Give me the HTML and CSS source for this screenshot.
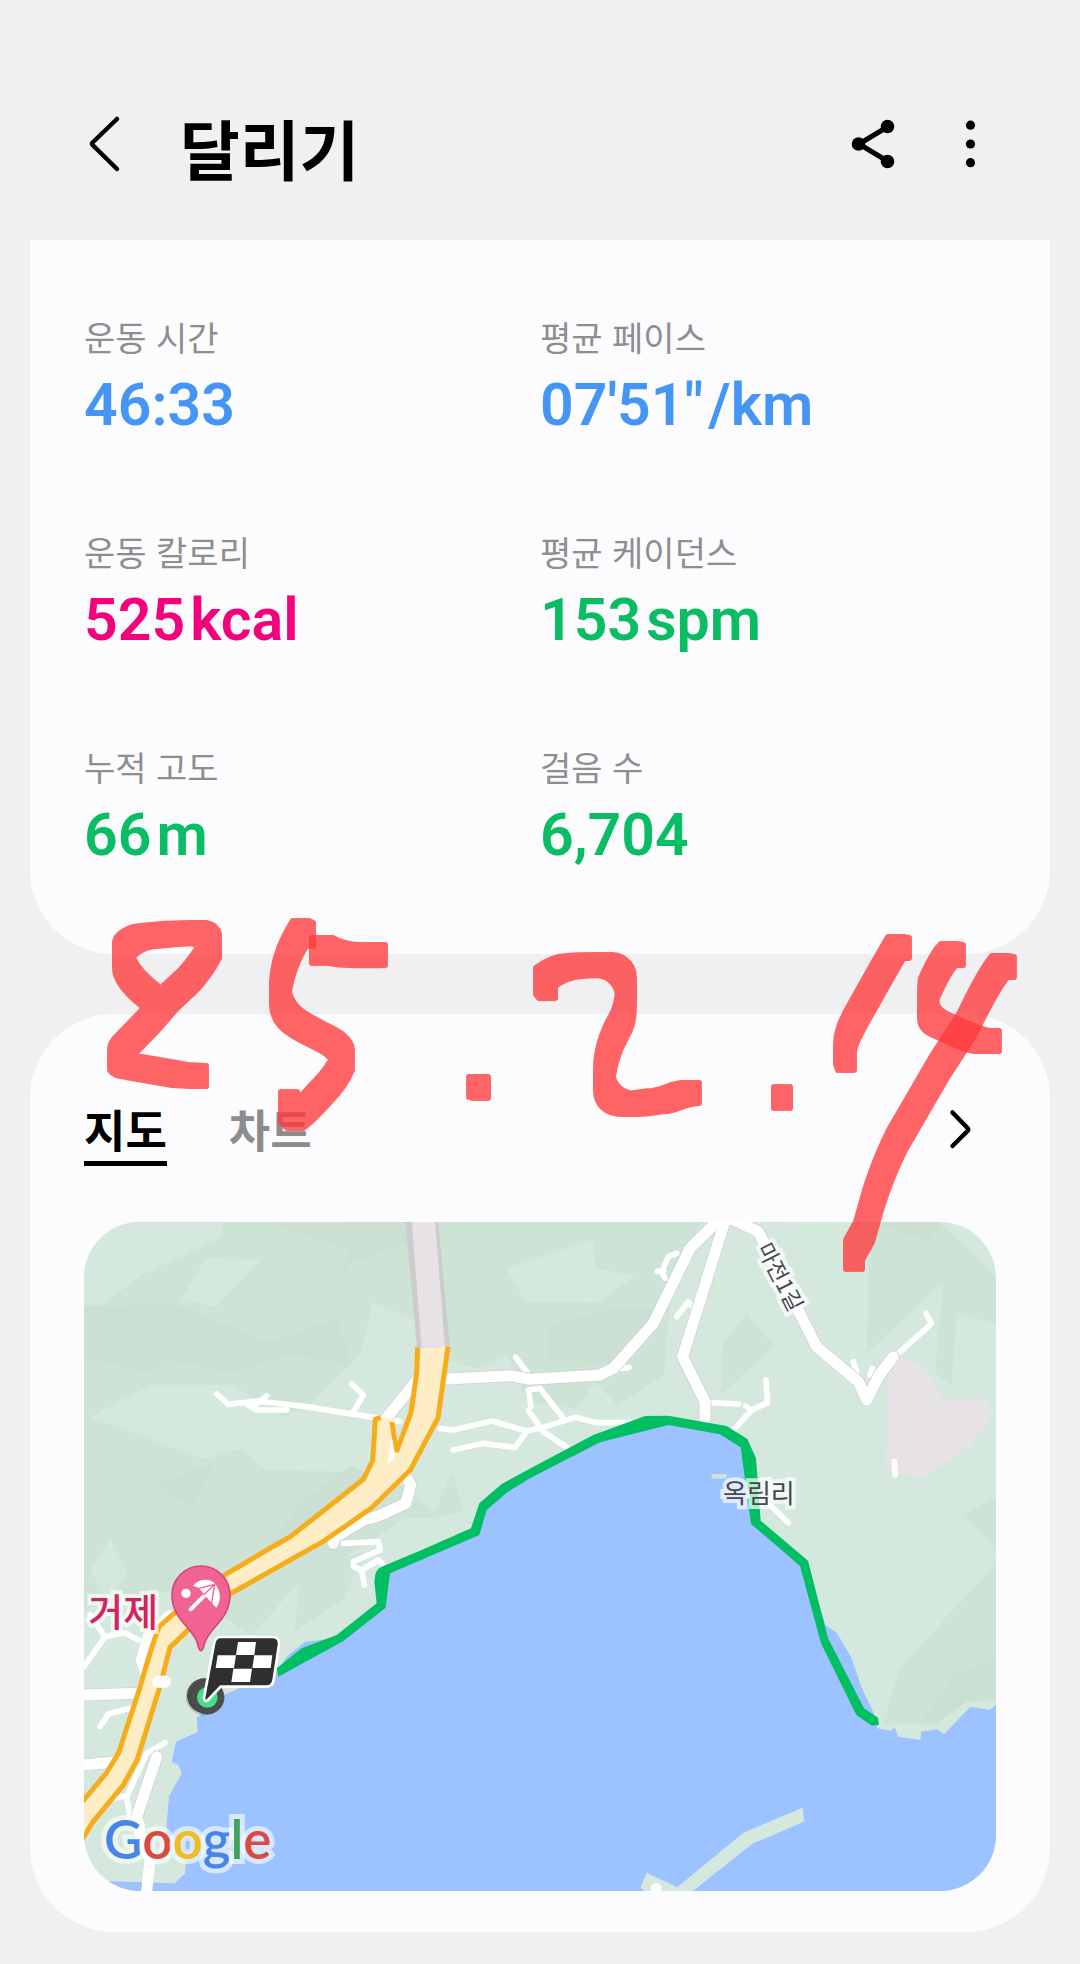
FILE: index.html
```html
<!DOCTYPE html>
<html lang="ko">
<head>
<meta charset="utf-8">
<meta name="viewport" content="width=device-width, initial-scale=1">
<title>달리기</title>
<link rel="stylesheet" href="styles.css">
</head>
<body>
<div class="page">
  <header class="topbar">
    <button class="icon-button back" type="button" aria-label="뒤로">
      <svg width="40" height="64" viewBox="0 0 40 64"><path d="M33 7 8.600 30.500Q7.500 31.800 8.600 33L33 57" fill="none" stroke="#000" stroke-width="4.500" stroke-linecap="round" stroke-linejoin="round"/></svg>
    </button>
    <h1 class="title">달리기</h1>
    <button class="icon-button" type="button" aria-label="공유">
      <svg width="48" height="64" viewBox="0 0 48 64"><path d="M38 14.500 9 32 38 49.500" fill="none" stroke="#000" stroke-width="5"/><circle cx="8.500" cy="32" r="6.800"/><circle cx="37.500" cy="14.500" r="6.800"/><circle cx="37.500" cy="49.500" r="6.800"/></svg>
    </button>
    <button class="icon-button more" type="button" aria-label="더보기">
      <svg width="48" height="64" viewBox="0 0 48 64"><circle cx="22.500" cy="13.200" r="4.600"/><circle cx="22.500" cy="32" r="4.600"/><circle cx="22.500" cy="50.700" r="4.600"/></svg>
    </button>
  </header>

  <main>
    <section class="card stats-card">
      <dl class="stats">
        <div class="stat"><dt>운동 시간</dt><dd class="blue">46:33</dd></div>
        <div class="stat"><dt>평균 페이스</dt><dd class="blue">07'51"<span class="unit">/km</span></dd></div>
        <div class="stat"><dt>운동 칼로리</dt><dd class="pink">525<span class="unit">kcal</span></dd></div>
        <div class="stat"><dt>평균 케이던스</dt><dd class="green">153<span class="unit">spm</span></dd></div>
        <div class="stat"><dt>누적 고도</dt><dd class="green">66<span class="unit">m</span></dd></div>
        <div class="stat"><dt>걸음 수</dt><dd class="green">6,704</dd></div>
      </dl>
    </section>

    <section class="card map-card">
      <div class="tabs">
        <button class="tab active" type="button">지도</button>
        <button class="tab" type="button">차트</button>
        <button class="icon-button open" type="button" aria-label="자세히">
          <svg width="48" height="60" viewBox="0 0 48 60"><path d="M4.500 9.500 19.500 25Q20.800 26.500 19.500 28L4.500 43" fill="none" stroke="#000" stroke-width="4.500" stroke-linecap="round" stroke-linejoin="round"/></svg>
        </button>
      </div>

      <div class="map">
        <svg class="map-art" viewBox="0 0 2736 2007" aria-hidden="true">
          <rect width="2736" height="2007" fill="#d5e8dd"/>
          <!-- terrain shading -->
          <g fill="#cde3d6">
            <path d="M0 0H1850L1760 200 1740 460 1600 550 1530 480 1480 560 1330 540 1270 400 1180 440 1040 400 993 294 865 240 832 395 680 545 600 585 450 490H200L18 585 360 712 470 680 550 745 900 750 1050 870 1105 750 1140 870 1060 885 960 890 870 950 640 1090 500 1240 300 1100 0 1150Z"/>
            <path d="M2358 0H2568L2736 164V304L2618 274 2603 489 2553 454 2578 179 2348 394Z"/>
            <path d="M1988 274 2071 372 1910 519 1918 364Z"/>
            <path d="M2736 1029 2580 1194 2448 1339 2396 1504 2548 1509 2648 1439 2736 1434Z"/>
            <path d="M2638 879 2736 824V974Z"/>
            <path d="M650 1045 840 990 780 1130 632 1230Z"/>
          </g>
          <g fill="#cbdfd3">
            <path d="M0 254 278 249 558 364 758 289 803 424 608 399 438 454 243 409 208 454 0 409Z"/>
            <path d="M558 4 968 0 978 59 808 119 758 184 798 84Z"/>
            <path d="M1398 309 1608 254 1728 264 1678 324 1588 424 1398 414Z"/>
            <path d="M218 789 388 724 328 852Z"/>
            <path d="M658 834 808 729 858 764 608 939 548 974Z"/>
            <path d="M2358 0H2568L2540 60Z"/>
            <path d="M2511 1499 2617 1354 2736 1314V1434L2648 1439 2548 1509Z"/>
          </g>
          <g fill="#d5e8dd">
            <path d="M0 0H415V45L170 160 55 250H0Z"/>
            <path d="M368 108 530 115 395 255 290 232Z"/>
            <path d="M1268 139 1528 52 1535 139 1653 162 1543 242 1323 240Z"/>
            <path d="M80 950 130 1050 70 1150 20 1040Z"/>
          </g>
          <g fill="#d3eadd">
            <path d="M2100 0H2358V110L2250 80Z"/>
            <path d="M1850 380 1900 130 2010 130Z"/>
            <path d="M2258 969 2308 899 2448 844 2528 914Z"/>
            <path d="M2395 1137 2499 1144 2428 1284Z"/>
          </g>
          <path d="M2413 444 2448 404 2518 429 2578 534 2703 529 2726 574 2663 669 2518 767 2438 754 2406 739Z" fill="#e7e2e6"/>
          <!-- sea -->
          <path d="M2736 1449 2716 1464 2659 1454 2580 1537 2559 1522 2511 1529 2509 1554 2443 1544 2432 1516 2422 1527 2380 1519 2374 1484 2332 1394 2301 1304 2259 1234 2225 1209 2161 1024 2018 909 1993 704 1978 664 1913 624 1748 600 1543 654 1338 759 1258 804 1193 859 1173 934 1038 979 908 1039 883 1084 893 1149 768 1249 663 1259 608 1304 578 1349 408 1424 338 1489 341 1529 276 1559 263 1619 283 1629 294 1654 255 1722 248 1804V1884L306 1914 303 1954 273 1984 78 1978H0V2007H2736Z" fill="#9cc2ff"/>
          <path d="M2156 1757 2160 1799 2004 1866 1827 2007H1680L1669 1997 1688 1952 1780 1996 1978 1832Z" fill="#d5e8dd"/>
          <circle cx="1717" cy="1999" r="16" fill="#fff"/>
          <path d="M1883 756H1928V770H1883Z" fill="#cde3d6"/>
          <!-- lanes -->
          <g fill="none" stroke="#fff" stroke-width="17" stroke-linecap="round" stroke-linejoin="round">
            <path d="M398 516 433 547 518 537 660 553 948 599M493 549 518 564H608M520 545 548 521"/>
            <path d="M803 486 838 519 808 569"/>
            <path d="M1068 619 1108 624 1223 597 1328 627 1378 616 1473 586 1538 602H1658"/>
            <path d="M1108 684 1198 664 1293 677 1328 629"/>
            <path d="M1295 406 1328 449M1341 554 1333 504 1368 499 1438 589M1333 565 1378 629 1448 676"/>
            <path d="M1883 542 1963 546M2046 474 2051 542 2003 564 1948 624M1985 552 2003 564"/>
            <path d="M1778 284 1813 239 1823 252M1778 94 1753 104 1733 149 1743 169M1720 148H1740M1613 439 1635 436"/>
            <path d="M2308 419 2318 449M2365 439 2358 459M2431 719 2433 759M2058 849 2113 902"/>
            <path d="M2443 394 2543 304 2526 274"/>
            <path d="M778 964 883 959 888 984 808 1019V1034L833 1044 883 1014 898 1029M833 1044 841 1089"/>
            <path d="M48 1514 73 1476 138 1459M0 1334 63 1244 123 1232 163 1254M63 1244 18 1179"/>
            <path d="M243 1562 188 1594 128 1724 138 1784M88 1729 128 1722"/>
          </g>
          <!-- local roads: soft edge first, then surface -->
          <g fill="none" stroke-linecap="round" stroke-linejoin="round">
            <g stroke="#d5d0d8" stroke-width="38">
              <path d="M1088 471 1278 461 1338 472 1548 459 1588 439 1708 304 1818 79 1898 0M1928-20 1796 404 1863 539V589M1938-11 2023 29 2198 374 2323 479 2348 534 2383 464 2428 404"/>
              <path d="M1000 472 903 594M963 759 980 789 966 844 878 884 838 894 748 949V964M0 1419 163 1414M0 1629 98 1619M218 1604 158 1784"/>
            </g>
            <g stroke="#fff" stroke-width="33">
              <path d="M1088 471 1278 461 1338 472 1548 459 1588 439 1708 304 1818 79 1898 0M1928-20 1796 404 1863 539V589M1938-11 2023 29 2198 374 2323 479 2348 534 2383 464 2428 404"/>
              <path d="M1000 472 903 594M963 759 980 789 966 844 878 884 838 894 748 949V964M0 1419 163 1414M0 1629 98 1619M218 1604 158 1784 173 1854 198 1914 188 2009"/>
              <path d="M258 1184 195 1244 175 1314 190 1360" stroke-width="38"/>
            </g>
          </g>
          <!-- trunk road -->
          <path d="M1001 374 998 454 981 572 937 690 924 596 900 584 874 592 866 716 838 772 618 945 590 960 430 1054 310 1139 225 1214 204 1274 180 1354 168 1396 104 1592 68 1652-10 1745V1860L25 1802 118 1689 160 1612 223 1409 238 1354 258 1276 310 1226 440 1115 718 958 860 860 979 744 1062 588 1092 374Z" fill="#ffeec5"/>
          <path d="M1001 374 998 454 981 572 937 690 924 600M890 586 874 592 866 716 838 772 618 945 590 960 430 1054 310 1139 225 1214 204 1274 180 1354 168 1396 104 1592 68 1652-10 1745M-10 1860 25 1802 118 1689 160 1612 223 1409 238 1354 258 1276 310 1226 440 1115 718 958 860 860 979 744 1062 588 1092 374" fill="none" stroke="#f5ad1b" stroke-width="15"/>
          <path d="M1013-5 1048 374" fill="none" stroke="#cbcccb" stroke-width="98"/>
          <path d="M1018-5 1048 378" fill="none" stroke="#e7e2e6" stroke-width="70"/>
          <path d="M922 640 934 700 928 712 910 730Z" fill="#fff"/>
          <path d="M223 1379H243" fill="none" stroke="#fff" stroke-width="36" stroke-linecap="round"/>
          <!-- run route -->
          <path d="M578 1339 653 1279 758 1239 878 1144 871 1079Q873 1040 893 1034L1013 984 1161 919 1186 844 1253 786 1368 724 1528 639 1683 582 1753 581 1928 612 1990 651 2016 709 2030 896 2172 1016 2232 1249 2340 1459 2382 1487 2385 1508 2364 1511 2317 1479 2211 1264 2148 1032 2093 984 2001 906 1970 676 1908 637 1753 609 1548 661 1338 769 1268 812 1208 864 1186 939 918 1054 905 1157 778 1257 583 1364Z" fill="#02bf64"/>
          <g transform="translate(-42 954)">
            <!-- beach pin -->
            <path d="M393 332C387 332 386 324 383 312 370 262 306 240 306 165A87 87 0 0 1 480 165C480 240 416 262 403 312 400 324 399 332 393 332Z" fill="#f16394" stroke="#d6457c" stroke-width="5"/>
            <circle cx="348" cy="160" r="14" fill="#fff"/>
            <path d="M362 208 424 146" stroke="#fff" stroke-width="12" stroke-linecap="round"/>
            <path d="M369 137C388 114 424 114 438 136 455 160 452 186 439 203L424 188 386 143Z" fill="#fff"/>
            <path d="M434 133 384 146M434 133 424 194M434 133 400 166" fill="none" stroke="#f16394" stroke-width="4"/>
            <!-- start and finish markers -->
            <circle cx="403" cy="470" r="56" fill="#000" opacity=".15"/>
            <circle cx="403" cy="467" r="52" fill="#4b4d4d"/>
            <circle cx="412" cy="472" r="50" fill="#4b4d4d" stroke="#3d3f3f" stroke-width="2"/>
            <circle cx="412" cy="472" r="31" fill="#48dc8f"/>
            <path d="M452 291H606Q629 291 627 314L611 420Q608 440 588 440H452L414 480Q404 488 402 474L432 312Q435 291 452 291Z" fill="#2f2f2f" stroke="#fff" stroke-width="8"/>
            <path d="M504 306H558L553 345H498ZM443 346H498L492 384H437ZM553 346H607L602 384H547ZM490 386H546L540 426H484Z" fill="#fff"/>
          </g>
        </svg>
        <span class="place road">마전1길</span>
        <span class="place village">옥림리</span>
        <span class="place city">거제</span>
        <span class="google"><span class="g-blue">G</span><span class="g-red">o</span><span class="g-yellow">o</span><span class="g-blue">g</span><span class="g-green">l</span><span class="g-red">e</span></span>
      </div>
    </section>
  </main>

  <!-- date note drawn by pen; the filter widens each line to a rectangular nib -->
  <svg class="ink" viewBox="0 0 1080 1964" role="img" aria-label="25.2.14">
    <filter id="nib" filterUnits="userSpaceOnUse" x="60" y="880" width="1000" height="420" color-interpolation-filters="sRGB">
      <feMorphology operator="dilate" radius="8 10"/>
    </filter>
    <g class="pen">
      <path d="M150 996C132 982 123 970 123 958V952C124 944 136 937 148 936 165 934 182 933 198 933 206 934 211 940 211 945V948C206 958 194 976 182 986 176 992 168 998 163 1005L149 1021 123 1048Q118 1054 118 1060C122 1066 128 1066 134 1067L180 1075 198 1076"/>
      <path d="M305 936V933L301 931C290 948 281 970 280 993 280 1008 288 1018 298 1024 310 1032 328 1039 334 1044Q344 1052 344 1060C340 1070 332 1082 322 1092 312 1103 304 1112 295 1118L289 1112V1102"/>
      <path d="M320 953V948H325C335 954 345 956 377 955"/>
      <path d="M477 1087H480V1088"/>
      <path d="M547 988 544 984V978C552 972 562 966 575 966 585 965 595 965 604 965 620 966 626 978 626 988V996C626 1006 624 1018 619 1026 610 1042 604 1060 604 1080 604 1095 614 1104 630 1104 645 1104 650 1101 660 1101 672 1099 680 1093 691 1093"/>
      <path d="M782 1097V1098"/>
      <path d="M901 948 896 947C884 968 868 996 858 1014 848 1032 844 1042 844 1054L846 1060"/>
      <path d="M955 955 949 954C940 962 934 978 929 988Q928 992 928 1008C928 1022 940 1024 950 1029 965 1036 975 1040 982 1041H991"/>
      <path d="M1006 967 1000 966C988 980 976 1006 966 1026L940 1066 897 1140C884 1166 878 1184 873 1200L864 1232 854 1250V1259"/>
    </g>
  </svg>
</div>
</body>
</html>
```
FILE: styles.css
```css
* {
  box-sizing: border-box;
}

body {
  margin: 0;
  background: #f0f0f3;
  color: #000;
  font-family: "Noto Sans CJK KR", sans-serif;
}

.page {
  position: relative;
  padding: 0 30px 32px;
}

.icon-button {
  display: block;
  padding: 0;
  border: 0;
  background: none;
}

.icon-button svg {
  display: block;
}

.topbar {
  display: flex;
  align-items: center;
  height: 240px;
  padding: 48px 54px 0;
}

.back {
  margin-right: 56px;
}

.title {
  flex: 1;
  margin: 0;
  padding-top: 6px;
  font-size: 65px;
  font-weight: 700;
  line-height: 64px;
}

.more {
  margin-left: 50px;
}

.card {
  background: #fcfcfe;
}

.stats-card {
  padding: 73px 54px 83px;
  border-radius: 0 0 84px 84px;
}

.stats {
  display: grid;
  grid-template-columns: 1fr 1fr;
  row-gap: 87px;
  margin: 0;
}

.stat dt {
  margin-bottom: 8px;
  color: #8e8e90;
  font-size: 34px;
  line-height: 48px;
}

.stat dd {
  margin: 0;
  font-family: Roboto, "Noto Sans CJK KR", sans-serif;
  font-size: 59px;
  font-weight: 600;
  line-height: 72px;
}

.unit {
  margin-left: 5px;
}

.blue {
  color: #4596f4;
}

.pink {
  color: #f4007d;
}

.green {
  color: #0abc64;
}

.map-card {
  margin-top: 60px;
  padding: 85px 54px 41px;
  border-radius: 84px;
}

.tabs {
  display: flex;
  gap: 62px;
  margin-bottom: 56px;
}

.tab {
  padding: 0 0 2px;
  border: 0;
  border-bottom: 5px solid transparent;
  background: none;
  color: #8c8c8c;
  font-family: inherit;
  font-size: 45px;
  font-weight: 700;
  line-height: 60px;
}

.tab.active {
  border-bottom-color: #000;
  color: #000;
}

.open {
  margin-left: auto;
}

.map {
  position: relative;
  overflow: hidden;
  border-radius: 56px;
}

.map-art {
  display: block;
  width: 100%;
}

.place {
  position: absolute;
  color: #47484f;
  white-space: nowrap;
  paint-order: stroke fill;
  -webkit-text-stroke: 8px rgba(255, 255, 255, 0.7);
}

.road {
  top: 8%;
  left: 76.5%;
  font-size: 22px;
  line-height: 24px;
  transform: translate(-50%, -50%) rotate(63deg);
}

.village {
  top: 40.4%;
  left: 74%;
  font-size: 26px;
  line-height: 32px;
  transform: translate(-50%, -50%);
}

.city {
  top: 58%;
  left: 4.3%;
  color: #d3255c;
  font-size: 38px;
  font-weight: 500;
  line-height: 44px;
  transform: translate(-50%, -50%);
}

.google {
  position: absolute;
  bottom: 3%;
  left: 2.2%;
  font-family: Lato, sans-serif;
  font-size: 53px;
  font-weight: 600;
  line-height: 64px;
  paint-order: stroke fill;
  -webkit-text-stroke: 10px rgba(255, 255, 255, 0.6);
}

.g-blue {
  color: #4885e8;
}

.g-red {
  color: #db4a3f;
}

.g-yellow {
  color: #f1bc1c;
}

.g-green {
  color: #3fa35a;
}

.ink {
  position: absolute;
  top: 0;
  left: 0;
  width: 100%;
  pointer-events: none;
}

.pen path {
  fill: none;
  stroke: #ff3b3d;
  stroke-width: 6;
  stroke-linecap: round;
  stroke-linejoin: round;
  filter: url(#nib);
  opacity: 0.79;
}
```
